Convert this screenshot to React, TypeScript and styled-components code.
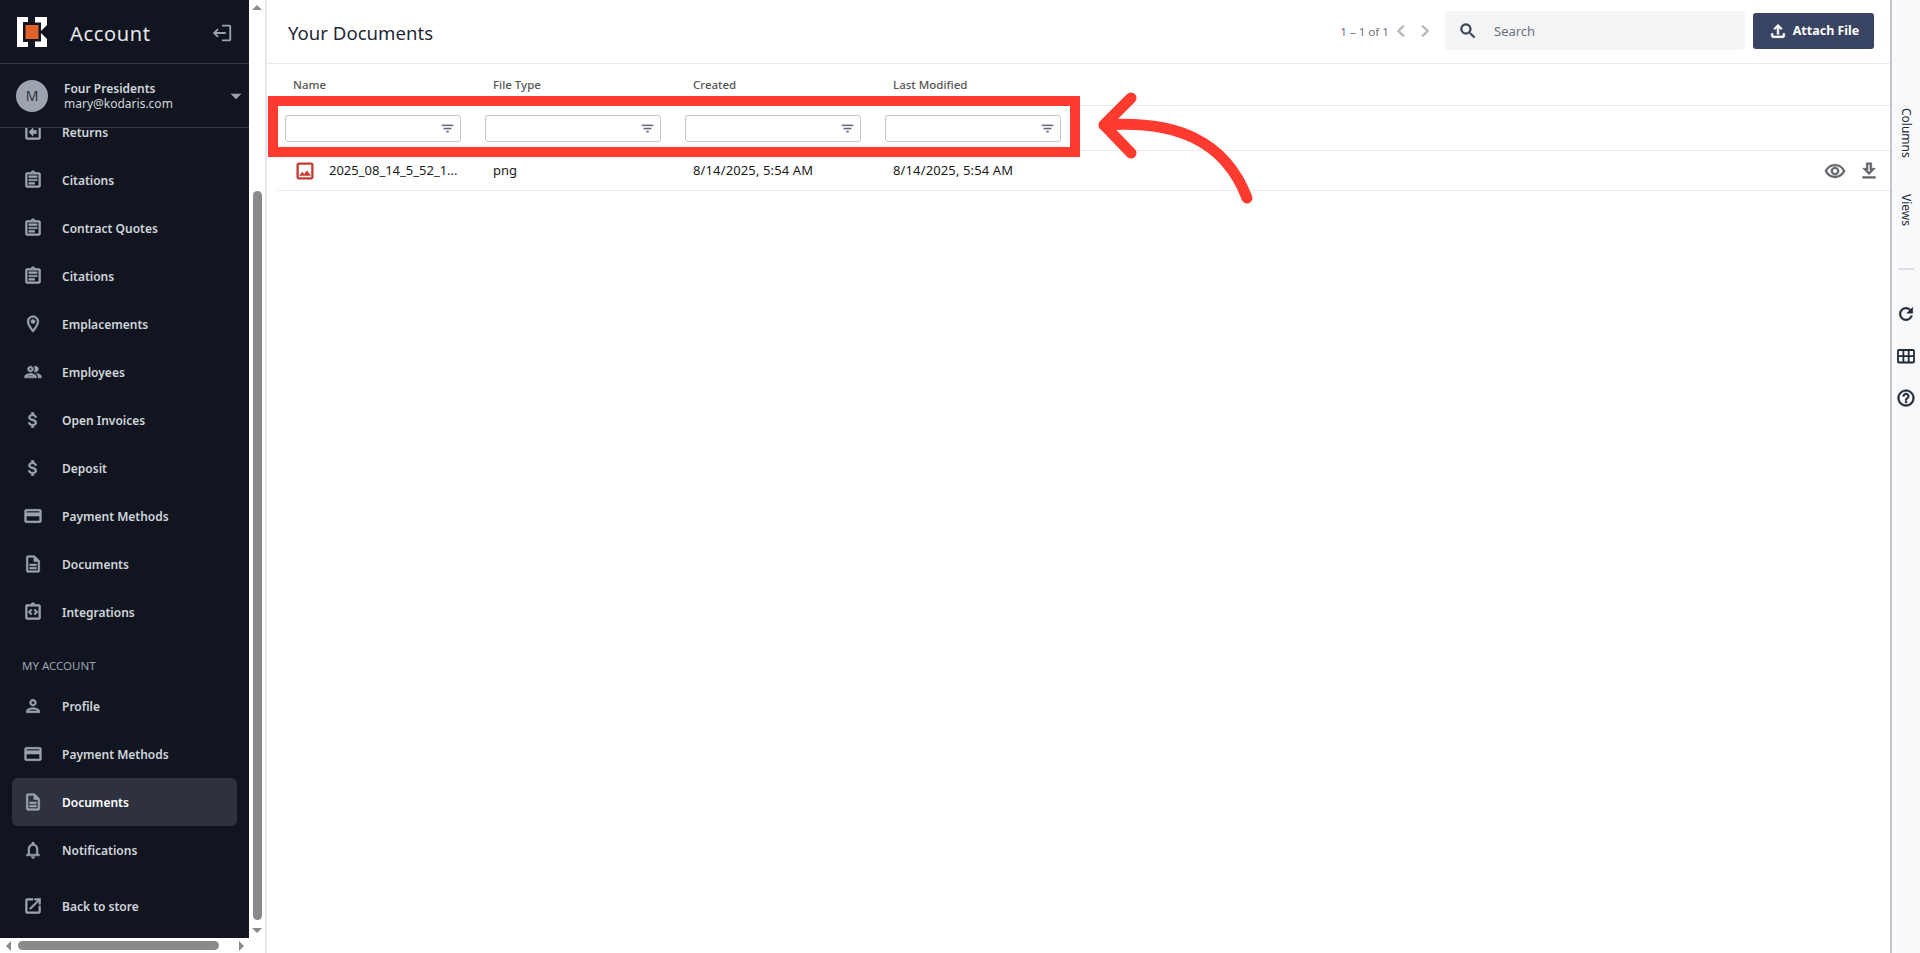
import { createGlobalStyle } from 'styled-components';
import styled from 'styled-components';
import type { ReactNode } from 'react';
import {
  MdArrowDropDown,
  MdAttachMoney,
  MdChevronLeft,
  MdChevronRight,
  MdFilterList,
  MdHelpOutline,
  MdLogout,
  MdOpenInNew,
  MdOutlineAssignment,
  MdOutlineAssignmentReturn,
  MdOutlineCreditCard,
  MdOutlineDescription,
  MdOutlineFileUpload,
  MdOutlineGetApp,
  MdOutlineImage,
  MdOutlineIntegrationInstructions,
  MdOutlineLocationOn,
  MdOutlineNotifications,
  MdOutlinePeople,
  MdOutlinePerson,
  MdOutlineRemoveRedEye,
  MdRefresh,
  MdSearch,
} from 'react-icons/md';

const GlobalStyle = createGlobalStyle`
  html, body {
    margin: 0;
    padding: 0;
    height: 100%;
    background: #fff;
    font-family: "Noto Sans", "Open Sans", sans-serif;
    overflow: hidden;
  }
  * { box-sizing: border-box; }
  /* the material icons carry an empty 24x24 box path, keep it out of the thickened strokes */
  svg path[fill="none"] { stroke: none; }
`;

const Page = styled.div`
  position: relative;
  display: flex;
  width: 100%;
  height: 953px;
  overflow: hidden;
`;

const LeftColumn = styled.div`
  display: flex;
  flex-direction: column;
  width: 265px;
  flex: none;
`;

const LeftBody = styled.div`
  display: flex;
  flex: 1;
  min-height: 0;
`;

const Sidebar = styled.aside`
  display: flex;
  flex-direction: column;
  width: 249px;
  background: #101520;
  color: #d1d5db;
`;

const Brand = styled.div`
  display: flex;
  align-items: center;
  height: 64px;
  padding: 0 16px 0 17px;
  border-bottom: 1px solid #33373f;
  flex: none;
`;

const BrandTitle = styled.div`
  margin: 4px 0 0 23px;
  flex: 1;
  font-size: 20px;
  letter-spacing: 0.65px;
  color: #e5e7eb;
`;

const BackIcon = styled(MdLogout)`
  width: 22px;
  height: 22px;
  margin-top: 2px;
  color: #9ca3af;
  transform: scaleX(-1);
`;

const UserBox = styled.div`
  display: flex;
  align-items: center;
  height: 64px;
  padding-left: 16px;
  border-bottom: 1px solid #33373f;
  flex: none;
  position: relative;
  z-index: 1;
  background: #101520;
`;

const Avatar = styled.div`
  display: flex;
  align-items: center;
  justify-content: center;
  width: 32px;
  height: 32px;
  border-radius: 50%;
  background: #9ca3af;
  color: #2d323e;
  font-size: 14px;
`;

const UserText = styled.div`
  margin-left: 16px;
  flex: 1;
  font-size: 12px;
  line-height: 15px;
`;

const UserName = styled.div`
  font-weight: 600;
`;

const Caret = styled(MdArrowDropDown)`
  width: 26px;
  height: 26px;
  color: #9ca3af;
`;

const NavScroll = styled.nav`
  display: flex;
  flex-direction: column;
  justify-content: flex-end;
  flex: 1;
  min-height: 0;
  overflow: hidden;
  padding: 0 12px 8px;
`;

const NavItem = styled.div<{ $active?: boolean; $gapTop?: number }>`
  display: flex;
  align-items: center;
  flex: none;
  height: 48px;
  margin-top: ${(p) => p.$gapTop ?? 0}px;
  padding-left: 11px;
  border-radius: 6px;
  font-size: 12px;
  font-weight: 600;
  background: ${(p) => (p.$active ? '#2d323e' : 'transparent')};
  color: ${(p) => (p.$active ? '#ffffff' : '#d1d5db')};
  svg {
    width: 20px;
    height: 20px;
    margin-right: 19px;
    color: #9ca3af;
    stroke: currentColor;
    stroke-width: 0.7;
    flex: none;
  }
`;

const SectionLabel = styled.div`
  flex: none;
  height: 20px;
  line-height: 20px;
  margin: 20px 0 6px;
  padding-left: 10px;
  font-size: 11.5px;
  color: #9ca3af;
`;

const VScroll = styled.div`
  display: flex;
  flex-direction: column;
  align-items: center;
  width: 16px;
  background: #fff;
  flex: none;
  padding-top: 5px;
`;

const ArrowUp = styled.div`
  width: 0;
  height: 0;
  border-left: 5px solid transparent;
  border-right: 5px solid transparent;
  border-bottom: 5px solid #8a8a8a;
`;

const ArrowDown = styled(ArrowUp)`
  border-bottom: 0;
  border-top: 5px solid #8a8a8a;
  margin-bottom: 5px;
`;

const VThumbSpace = styled.div`
  flex: 1;
  width: 9px;
  display: flex;
  flex-direction: column;
  justify-content: flex-end;
  padding-bottom: 8px;
`;

const VThumb = styled.div`
  height: 729px;
  border-radius: 5px;
  background: #8a8a8a;
`;

const HScroll = styled.div`
  display: flex;
  align-items: center;
  height: 15px;
  padding: 0 6px;
  gap: 7px;
  background: #fff;
  flex: none;
`;

const ArrowLeft = styled.div`
  width: 0;
  height: 0;
  border-top: 5px solid transparent;
  border-bottom: 5px solid transparent;
  border-right: 5px solid #8a8a8a;
`;

const ArrowRight = styled.div`
  width: 0;
  height: 0;
  margin-left: 13px;
  border-top: 5px solid transparent;
  border-bottom: 5px solid transparent;
  border-left: 5px solid #8a8a8a;
`;

const HThumb = styled.div`
  width: 201px;
  height: 9px;
  border-radius: 5px;
  background: #8a8a8a;
`;

const Main = styled.main`
  display: flex;
  flex-direction: column;
  flex: 1;
  min-width: 0;
  border-left: 2px solid #e5e7eb;
`;

const Toolbar = styled.header`
  display: flex;
  align-items: center;
  height: 64px;
  padding: 0 16px 2px 21px;
  border-bottom: 1px solid #e9eaec;
  flex: none;
`;

const PageTitle = styled.h1`
  flex: 1;
  margin: 3px 0 0;
  font-size: 18.6px;
  font-weight: 400;
  color: #1f2937;
`;

const Pager = styled.div`
  margin-top: 2px;
  font-size: 11.6px;
  color: #6b7280;
`;

const PagerArrows = styled.div`
  display: flex;
  align-items: center;
  margin: 0 8px 0 0;
  color: #b5b8bd;
  svg {
    width: 24px;
    height: 24px;
    stroke: currentColor;
    stroke-width: 0.5;
  }
`;

const SearchBox = styled.div`
  display: flex;
  align-items: center;
  width: 300px;
  height: 39px;
  padding-left: 13px;
  border-radius: 4px;
  background: #f3f4f6;
  color: #6b7280;
  font-size: 13px;
  svg {
    width: 20px;
    height: 20px;
    margin-right: 16px;
    color: #374151;
    stroke: currentColor;
    stroke-width: 0.6;
  }
`;

const AttachButton = styled.button`
  display: flex;
  align-items: center;
  justify-content: center;
  gap: 5px;
  width: 121px;
  height: 36px;
  margin-left: 8px;
  border: 0;
  border-radius: 3px;
  background: #394362;
  color: #fff;
  font-family: inherit;
  font-size: 12.5px;
  font-weight: 700;
  svg {
    width: 20px;
    height: 20px;
    stroke: currentColor;
    stroke-width: 0.8;
  }
`;

const GridHost = styled.div`
  flex: 1;
  padding-left: 10px;
`;

const Row = styled.div<{ $h: number }>`
  display: flex;
  align-items: center;
  height: ${(p) => p.$h}px;
  border-bottom: 1px solid #e9eaec;
  font-size: 13px;
`;

const HeadCell = styled.div`
  width: 200px;
  padding-left: 16px;
  font-size: 11.5px;
  font-weight: 500;
  color: #555;
`;

const FilterCell = styled.div`
  width: 200px;
  padding-left: 8px;
`;

const FilterInput = styled.div`
  display: flex;
  align-items: center;
  justify-content: flex-end;
  width: 176px;
  height: 27px;
  padding-right: 5px;
  border: 1px solid #c4c7cc;
  border-radius: 3px;
  background: #fff;
  svg {
    width: 15px;
    height: 15px;
    color: #6b7280;
    stroke: currentColor;
    stroke-width: 0.6;
  }
`;

const BodyCell = styled.div<{ $spaced?: boolean }>`
  display: flex;
  align-items: center;
  width: 200px;
  height: 100%;
  padding: 0 0 2px 16px;
  color: #1a1a1a;
  letter-spacing: ${(p) => (p.$spaced ? '0.13px' : '0')};
`;

const NameCell = styled(BodyCell)`
  padding-left: 17px;
  svg {
    width: 22px;
    height: 22px;
    margin: 2px 13px 0 0;
    color: #c0392b;
    stroke: currentColor;
    stroke-width: 0.5;
    flex: none;
  }
`;

const RowActions = styled.div`
  display: flex;
  align-items: center;
  gap: 12px;
  margin-left: auto;
  padding-right: 10px;
  color: #5f6368;
  svg {
    width: 22px;
    height: 22px;
    stroke: currentColor;
    stroke-width: 0.5;
  }
`;

const RightRail = styled.aside`
  display: flex;
  flex-direction: column;
  align-items: center;
  width: 30px;
  flex: none;
  padding-top: 108px;
  border-left: 2px solid #c3c6cc;
  background: #f8f9fb;
  color: #1f2937;
`;

const RailTab = styled.div<{ $mb: number }>`
  writing-mode: vertical-rl;
  font-size: 12px;
  line-height: 16px;
  margin-bottom: ${(p) => p.$mb}px;
`;

const RailDivider = styled.div`
  width: 16px;
  height: 2px;
  background: #dcdee2;
  margin-bottom: 34px;
`;

const RailIcon = styled.div`
  display: flex;
  align-items: center;
  justify-content: center;
  height: 20px;
  margin-bottom: 22px;
  svg {
    width: 20px;
    height: 20px;
    stroke: currentColor;
    stroke-width: 0.6;
  }
`;

// annotation painted on top of the screenshot
const HighlightBox = styled.div`
  position: absolute;
  left: 268px;
  top: 96px;
  width: 812px;
  height: 61px;
  border: 10px solid #ff3b30;
`;

const ArrowOverlay = styled.svg`
  position: absolute;
  left: 1080px;
  top: 80px;
  width: 190px;
  height: 140px;
`;

const Logo = () => (
  <svg width="30" height="30" viewBox="0 0 30 30">
    <path d="M0 0H11V5H6V25H11V30H0z" fill="#fff" />
    <path d="M18 0H30V8L24 14V5.5H18z" fill="#fff" />
    <path d="M18 30H30V22L24 16V24.5H18z" fill="#fff" />
    <rect x="8.5" y="8" width="13" height="14" fill="#e0622a" />
  </svg>
);

const TableIcon = () => (
  <svg viewBox="0 0 20 20" fill="none">
    <rect x="2" y="4" width="16" height="12.5" rx="1" strokeWidth="1.8" />
    <path d="M2 10.2h16M7.4 4v12.5M12.7 4v12.5" strokeWidth="1.8" />
  </svg>
);

type NavEntry = { icon: ReactNode; label: string; active?: boolean; gapTop?: number };

const mainNav: NavEntry[] = [
  { icon: <MdOutlineAssignmentReturn />, label: 'Returns' },
  { icon: <MdOutlineAssignment />, label: 'Citations' },
  { icon: <MdOutlineAssignment />, label: 'Contract Quotes' },
  { icon: <MdOutlineAssignment />, label: 'Citations' },
  { icon: <MdOutlineLocationOn />, label: 'Emplacements' },
  { icon: <MdOutlinePeople />, label: 'Employees' },
  { icon: <MdAttachMoney />, label: 'Open Invoices' },
  { icon: <MdAttachMoney />, label: 'Deposit' },
  { icon: <MdOutlineCreditCard />, label: 'Payment Methods' },
  { icon: <MdOutlineDescription />, label: 'Documents' },
  { icon: <MdOutlineIntegrationInstructions />, label: 'Integrations' },
];

const accountNav: NavEntry[] = [
  { icon: <MdOutlinePerson />, label: 'Profile' },
  { icon: <MdOutlineCreditCard />, label: 'Payment Methods' },
  { icon: <MdOutlineDescription />, label: 'Documents', active: true },
  { icon: <MdOutlineNotifications />, label: 'Notifications' },
  { icon: <MdOpenInNew />, label: 'Back to store', gapTop: 8 },
];

const columns = ['Name', 'File Type', 'Created', 'Last Modified'];

function NavRow({ entry }: { entry: NavEntry }) {
  return (
    <NavItem $active={entry.active} $gapTop={entry.gapTop}>
      {entry.icon}
      {entry.label}
    </NavItem>
  );
}

function App() {
  return (
    <Page>
      <GlobalStyle />
      <LeftColumn>
        <LeftBody>
          <Sidebar>
            <Brand>
              <Logo />
              <BrandTitle>Account</BrandTitle>
              <BackIcon />
            </Brand>
            <UserBox>
              <Avatar>M</Avatar>
              <UserText>
                <UserName>Four Presidents</UserName>
                <div>mary@kodaris.com</div>
              </UserText>
              <Caret />
            </UserBox>
            <NavScroll>
              {mainNav.map((entry, i) => (
                <NavRow key={i} entry={entry} />
              ))}
              <SectionLabel>MY ACCOUNT</SectionLabel>
              {accountNav.map((entry, i) => (
                <NavRow key={i} entry={entry} />
              ))}
            </NavScroll>
          </Sidebar>
          <VScroll>
            <ArrowUp />
            <VThumbSpace>
              <VThumb />
            </VThumbSpace>
            <ArrowDown />
          </VScroll>
        </LeftBody>
        <HScroll>
          <ArrowLeft />
          <HThumb />
          <ArrowRight />
        </HScroll>
      </LeftColumn>

      <Main>
        <Toolbar>
          <PageTitle>Your Documents</PageTitle>
          <Pager>1 – 1 of 1</Pager>
          <PagerArrows>
            <MdChevronLeft />
            <MdChevronRight />
          </PagerArrows>
          <SearchBox>
            <MdSearch />
            Search
          </SearchBox>
          <AttachButton>
            <MdOutlineFileUpload />
            Attach File
          </AttachButton>
        </Toolbar>
        <GridHost>
          <Row $h={42}>
            {columns.map((c) => (
              <HeadCell key={c}>{c}</HeadCell>
            ))}
          </Row>
          <Row $h={45}>
            {columns.map((c) => (
              <FilterCell key={c}>
                <FilterInput>
                  <MdFilterList />
                </FilterInput>
              </FilterCell>
            ))}
          </Row>
          <Row $h={40}>
            <NameCell>
              <MdOutlineImage />
              2025_08_14_5_52_1...
            </NameCell>
            <BodyCell>png</BodyCell>
            <BodyCell $spaced>8/14/2025, 5:54 AM</BodyCell>
            <BodyCell $spaced>8/14/2025, 5:54 AM</BodyCell>
            <RowActions>
              <MdOutlineRemoveRedEye />
              <MdOutlineGetApp />
            </RowActions>
          </Row>
        </GridHost>
      </Main>

      <RightRail>
        <RailTab $mb={36}>Columns</RailTab>
        <RailTab $mb={42}>Views</RailTab>
        <RailDivider />
        <RailIcon>
          <MdRefresh />
        </RailIcon>
        <RailIcon>
          <TableIcon />
        </RailIcon>
        <RailIcon>
          <MdHelpOutline />
        </RailIcon>
      </RightRail>

      <HighlightBox />
      <ArrowOverlay viewBox="0 0 190 140" fill="none">
        <path
          d="M51 18L24 45L51 73M24 45C95 40 145 60 167 118"
          stroke="#ff3b30"
          strokeWidth="11"
          strokeLinecap="round"
          strokeLinejoin="round"
        />
      </ArrowOverlay>
    </Page>
  );
}

export default App;
